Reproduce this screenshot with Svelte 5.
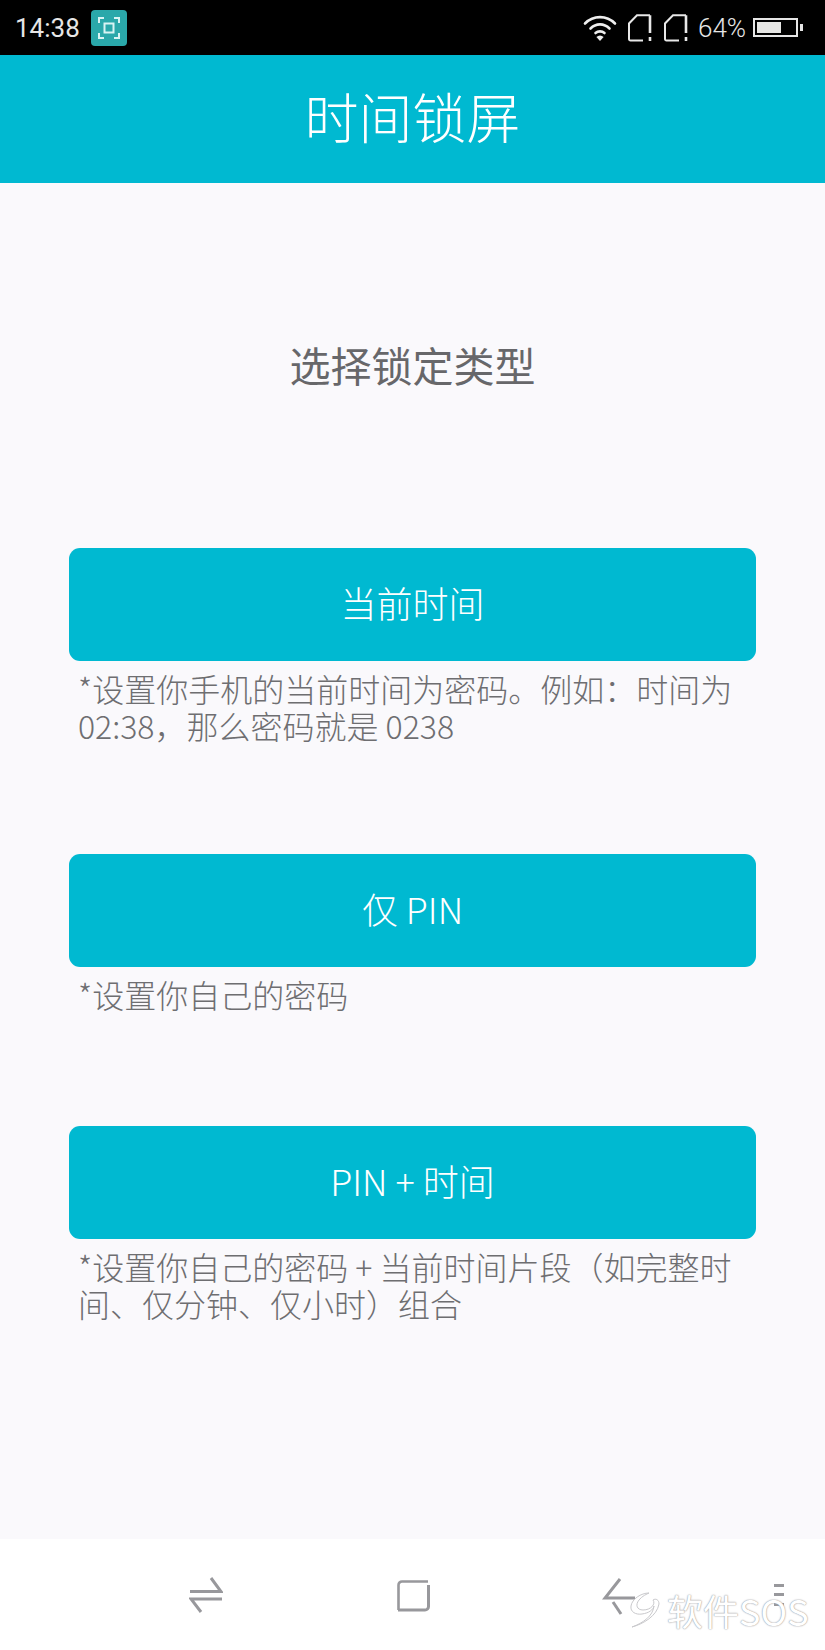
<script>
  const options = [
    { label: '当前时间', desc: '*设置你手机的当前时间为密码。例如：时间为 02:38，那么密码就是 0238' },
    { label: '仅 PIN', desc: '*设置你自己的密码' },
    { label: 'PIN + 时间', desc: '*设置你自己的密码 + 当前时间片段（如完整时间、仅分钟、仅小时）组合' }
  ];
</script>

<div class="phone">
  <div class="status">
    <span class="time">14:38</span>
    <span class="shot">
      <svg width="24" height="24" viewBox="0 0 24 24" fill="none" stroke="#d8f3f3" stroke-width="2">
        <path d="M2 7V2h5M17 2h5v5M22 17v5h-5M7 22H2v-5" />
        <rect x="7.5" y="7.5" width="9" height="9" />
      </svg>
    </span>
    <span class="spacer"></span>
    <svg class="wifi" width="34" height="27" viewBox="0 0 34 27" fill="none" stroke="#eee" stroke-width="2.6" stroke-linecap="round">
      <path d="M2 9.5C10.5 1 23.5 1 32 9.5" />
      <path d="M7.5 14.5C13 9 21 9 26.5 14.5" />
      <path d="M12.5 19C15 16.8 19 16.8 21.5 19" />
      <path d="M17 27l-3.6-4a5 5 0 0 1 7.2 0z" fill="#eee" stroke="none" />
    </svg>
    <svg class="sim" width="24" height="28" viewBox="0 0 24 28" fill="none" stroke="#e8e8e8" stroke-width="2">
      <path d="M15 26.500H2.500a1.500 1.500 0 0 1-1.500-1.500V9.500L9 1.200h13" />
      <path d="M22 1.200V19M22 23v4" stroke-width="2.600" />
    </svg>
    <svg class="sim second" width="24" height="28" viewBox="0 0 24 28" fill="none" stroke="#e8e8e8" stroke-width="2">
      <path d="M15 26.500H2.500a1.500 1.500 0 0 1-1.500-1.500V9.500L9 1.200h13" />
      <path d="M22 1.200V19M22 23v4" stroke-width="2.600" />
    </svg>
    <span class="pct">64%</span>
    <span class="battery"><span class="level" style="width: 64%"></span></span>
    <span class="tip"></span>
  </div>

  <header class="bar">时间锁屏</header>

  <main class="main">
    <h1 class="heading">选择锁定类型</h1>
    {#each options as o, i}
      <section class="option opt{i}">
        <button class="cta">{o.label}</button>
        <p class="desc">{o.desc}</p>
      </section>
    {/each}
  </main>

  <nav class="nav">
    <svg class="recents" width="34" height="36" viewBox="0 0 34 36" fill="none" stroke="#98989c" stroke-width="3">
      <path d="M1 14.500H32L22 1" />
      <path d="M33 22H2L12 35" />
    </svg>
    <svg class="home" width="33" height="32" viewBox="0 0 33 32" fill="none" stroke="#98989c" stroke-width="2.600">
      <path d="M31 1.500H5a3.500 3.500 0 0 0-3.500 3.500V30" />
      <path d="M1 30H28a3.500 3.500 0 0 0 3.500-3.500V5" stroke-width="3" />
    </svg>
    <svg class="back" width="34" height="37" viewBox="0 0 34 37" fill="none" stroke="#98989c" stroke-width="3">
      <path d="M18 1L3 20H33" />
      <path d="M11 24L19 36" />
    </svg>
    <svg class="menu" width="12" height="24" viewBox="0 0 12 24" fill="#98989c">
      <rect x="1" y="1" width="10" height="3" />
      <rect x="1" y="10" width="10" height="3" />
      <rect x="1" y="20" width="10" height="3" />
    </svg>
  </nav>

  <div class="mark">
    <svg width="32" height="36" viewBox="0 0 32 36" fill="#fff" stroke="#c9c9cc" stroke-width="1">
      <path d="M3 35C14 32 28 24 30 12 30 8 27 6 24 8 27 12 22 18 14 18 8 18 6 13 10 8 13 4 18 2 20 1 12 1 3 7 2 14 1 20 7 23 13 22 20 21 24 18 25 14 24 24 14 31 3 35z" />
    </svg>
    <span>软件SOS</span>
  </div>
</div>

<style>
  :global(body) {
    margin: 0;
    background: #fff;
  }

  .phone {
    position: relative;
    width: 825px;
    height: 1650px;
    display: flex;
    flex-direction: column;
    overflow: hidden;
    font-family: "Noto Sans CJK SC", "Noto Sans", sans-serif;
    font-weight: 300;
  }

  .status {
    flex: 0 0 55px;
    display: flex;
    align-items: center;
    background: #000;
    color: #e6e6e6;
    font-family: Roboto, "Noto Sans", sans-serif;
    font-size: 26px;
    padding: 0 22px 0 15px;
    box-sizing: border-box;
  }

  .time {
    width: 76px;
    font-weight: 400;
  }

  .shot {
    width: 36px;
    height: 36px;
    border-radius: 4px;
    background: #2aa8aa;
    display: flex;
    align-items: center;
    justify-content: center;
  }

  .spacer {
    flex: 1;
  }

  .sim {
    margin-left: 11px;
  }

  .sim.second {
    margin-left: 12px;
  }

  .pct {
    margin-left: 10px;
    width: 55px;
  }

  .battery {
    width: 45px;
    height: 19px;
    border: 2px solid #e6e6e6;
    box-sizing: border-box;
    padding: 2px;
    display: flex;
  }

  .level {
    background: #e6e6e4;
  }

  .tip {
    width: 3px;
    height: 7px;
    margin-left: 2px;
    background: #e6e6e6;
  }

  .bar {
    flex: 0 0 128px;
    display: flex;
    align-items: center;
    justify-content: center;
    background: #00b9d1;
    color: #fff;
    font-size: 54px;
    line-height: 1;
    padding-bottom: 6px;
    box-sizing: border-box;
  }

  .main {
    flex: 1;
    background: #faf9fc;
    padding: 0 69px;
  }

  .heading {
    margin: 151px 0 154px;
    font-size: 41px;
    line-height: 60px;
    font-weight: 400;
    color: #67676a;
    text-align: center;
  }

  .option {
    margin-top: 110px;
  }

  .opt0 {
    margin-top: 0;
  }

  .opt2 {
    margin-top: 113px;
  }

  .cta {
    display: block;
    width: 100%;
    height: 113px;
    border: 0;
    border-radius: 11px;
    background: #00b9d1;
    color: #fff;
    font-family: inherit;
    font-weight: 300;
    font-size: 36px;
    line-height: 1;
    padding: 0 0 6px;
  }

  .desc {
    margin: 9px 0 0;
    padding: 0 20px 0 9px;
    font-size: 32px;
    line-height: 37px;
    color: #6e6e71;
  }

  .nav {
    flex: 0 0 111px;
    background: #fff;
    position: relative;
  }

  .nav svg {
    position: absolute;
  }

  .recents {
    left: 189px;
    top: 38px;
  }

  .home {
    left: 397px;
    top: 41px;
  }

  .back {
    left: 602px;
    top: 39px;
  }

  .menu {
    left: 773px;
    top: 44px;
  }

  .mark {
    position: absolute;
    left: 629px;
    top: 1592px;
    display: flex;
    align-items: center;
    gap: 6px;
    color: #fff;
    font-size: 36px;
    font-weight: 400;
    line-height: 36px;
    white-space: nowrap;
    text-shadow: 0 0 1px #8d8d90, 0 0 2px #b5b5b8;
  }
</style>
